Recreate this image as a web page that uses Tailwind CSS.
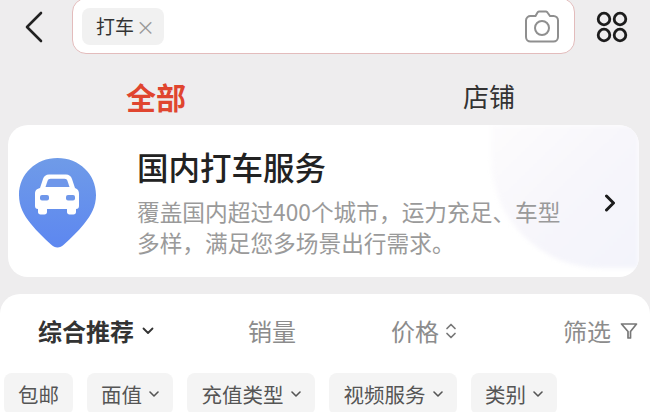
<!DOCTYPE html>
<html lang="zh-CN">

<head>
  <meta charset="UTF-8">
  <meta name="viewport" content="width=device-width, initial-scale=1.0">
  <title>打车</title>
  <script src="https://cdn.jsdelivr.net/npm/@tailwindcss/browser@4"></script>
</head>

<body class="w-[650px] h-[412px] overflow-hidden bg-[#eeedee] font-['Noto_Sans_CJK_SC','Noto_Sans',sans-serif] text-[#222]">
  <!-- search bar -->
  <div class="flex items-end h-[54px]">
    <button class="w-[72px] h-[54px] flex items-center pl-6">
      <svg width="20" height="32" viewBox="0 0 20 32" fill="none" stroke="#222" stroke-width="2.6" stroke-linecap="round" stroke-linejoin="round">
        <path d="M17 2 3 16l14 14" />
      </svg>
    </button>
    <div class="w-[503px] h-[56px] bg-white border border-[#e3bcbc] rounded-[14px] flex items-center justify-between pl-[9px] pr-[14px]">
      <div class="h-[37px] w-[82px] rounded-lg bg-[#f1f1f1] flex items-center pl-[14px] text-[19px] text-[#333]">
        打车<span class="ml-[2px] text-[19px] text-[#999] leading-none">×</span>
      </div>
      <svg width="36" height="34" viewBox="0 0 36 34" fill="none" stroke="#8f8f8f" stroke-width="2">
        <path d="M7 7h4.500l2-3.500a2 2 0 0 1 1.500-1h7a2 2 0 0 1 1.500 1L26 7h3.500A4.500 4.500 0 0 1 34 11.500V28a4.500 4.500 0 0 1-4.500 4.500h-23A4.500 4.500 0 0 1 2 28V11.500A4.500 4.500 0 0 1 7 7Z" />
        <circle cx="18" cy="19" r="7" />
      </svg>
    </div>
    <div class="flex-1 h-[54px] flex items-center justify-center pr-[1px]">
      <svg width="32" height="32" viewBox="0 0 32 32" fill="none" stroke="#1c1c1c" stroke-width="2.800">
        <circle cx="8" cy="8" r="5.800" />
        <circle cx="24" cy="8" r="5.800" />
        <circle cx="8" cy="24" r="5.800" />
        <circle cx="24" cy="24" r="5.800" />
      </svg>
    </div>
  </div>

  <!-- tabs -->
  <div class="h-[71px] flex items-center pt-[13px]">
    <div class="w-[312px] shrink-0 text-center text-[30px] font-bold text-[#e0452f] leading-none">全部</div>
    <div class="w-[354px] shrink-0 text-center text-[26px] text-[#333] leading-none">店铺</div>
  </div>

  <!-- service card -->
  <div class="relative mx-2 h-[152px] w-[631px] rounded-[20px] bg-white overflow-hidden flex items-center pl-[10px]">
    <div class="absolute right-0 top-0 w-[148px] h-[143px] rounded-bl-[110px] bg-linear-to-br from-[#fdfcfd] via-[#f7f6fb] to-[#f3f4fb] blur-[2px]"></div>
    <svg class="relative shrink-0 mt-[2px]" width="79" height="91" viewBox="0 0 79 91">
      <defs>
        <linearGradient id="pin" x1="0" y1="0" x2="0" y2="1">
          <stop offset="0" stop-color="#6f9be8" />
          <stop offset="1" stop-color="#5d87f0" />
        </linearGradient>
      </defs>
      <path d="M39.500 1C61 1 78 17 78 38c0 11-4.500 20-12 29-6.500 8-13 14-20 20.500-4 4-9 4-13 0-7-6.500-13.500-12.500-20-20.500C5.500 58 1 49 1 38 1 17 18 1 39.500 1Z" fill="url(#pin)" />
      <path d="M22 31l3-9c1-3 3-4.500 6-4.500h17c3 0 5 1.500 6 4.500l3 9c3 1 4 3 4 6v12c0 2-1 3-3 3v3c0 1.500-1 2.500-2.500 2.500h-4c-1.500 0-2.500-1-2.500-2.500v-3H29v3c0 1.500-1 2.500-2.500 2.500h-4c-1.500 0-2.500-1-2.500-2.500v-3c-2 0-3-1-3-3V37c0-3 1-5 5-6Z" fill="#fff" />
      <path d="M27.500 30l2-6c.5-1.500 1.500-2.200 3-2.200h14c1.500 0 2.500.7 3 2.200l2 6Z" fill="#6f97ea" />
      <rect x="22" y="38" width="9" height="5.500" rx="2" fill="#6f97ea" />
      <rect x="48" y="38" width="9" height="5.500" rx="2" fill="#6f97ea" />
    </svg>
    <div class="relative ml-[40px] w-[436px] mt-[2px]">
      <h1 class="text-[31.500px] leading-[40px] font-medium text-[#222]">国内打车服务</h1>
      <p class="mt-[10px] text-[22.700px] leading-[31px] text-[#9a9a9a]">覆盖国内超过400个城市，运力充足、车型多样，满足您多场景出行需求。</p>
    </div>
    <svg class="absolute right-[23px] top-[69px]" width="12" height="18" viewBox="0 0 12 18" fill="none" stroke="#1c1c1c" stroke-width="3" stroke-linecap="round" stroke-linejoin="round">
      <path d="m2.500 2 7 7-7 7" />
    </svg>
  </div>

  <!-- result panel -->
  <div class="mt-[17px] h-[130px] rounded-t-[20px] bg-white">
    <div class="h-[76px] flex items-center pl-[38px] text-[24px] text-[#8c8c8c] pb-[3px] whitespace-nowrap">
      <div class="w-[210px] shrink-0 flex items-center gap-[8px] font-bold text-[#333]">
        综合推荐
        <svg width="12" height="8" viewBox="0 0 12 8" fill="none" stroke="#333" stroke-width="1.800" stroke-linecap="round" stroke-linejoin="round"><path d="m1.500 1.500 4.500 4.500 4.500-4.500" /></svg>
      </div>
      <div class="w-[143px] shrink-0">销量</div>
      <div class="w-[172px] shrink-0 flex items-center gap-[6px]">
        价格
        <svg width="12" height="18" viewBox="0 0 12 18" fill="none" stroke="#777" stroke-width="1.700" stroke-linecap="round" stroke-linejoin="round"><path d="m2 6.500 4-4 4 4M2 11.500l4 4 4-4" /></svg>
      </div>
      <div class="shrink-0 flex items-center gap-[9px]">
        筛选
        <svg width="18" height="18" viewBox="0 0 18 18" fill="none" stroke="#777" stroke-width="1.700" stroke-linejoin="round"><path d="M1.500 2h15L10.500 9.500V16h-2.500V9.500Z" /></svg>
      </div>
    </div>
    <div class="flex gap-[14px] pl-1 pt-[3px] text-[20.500px] text-[#555]">
      <div class="h-[42px] w-[69px] flex items-center justify-center rounded-lg bg-[#f4f4f4]">包邮</div>
      <div class="h-[42px] w-[86px] flex items-center justify-center gap-[7px] rounded-lg bg-[#f4f4f4]">
        面值
        <svg width="10" height="6" viewBox="0 0 10 6" fill="none" stroke="#555" stroke-width="1.600" stroke-linecap="round" stroke-linejoin="round"><path d="m1 1 4 4 4-4" /></svg>
      </div>
      <div class="h-[42px] w-[128px] flex items-center justify-center gap-[7px] rounded-lg bg-[#f4f4f4]">
        充值类型
        <svg width="10" height="6" viewBox="0 0 10 6" fill="none" stroke="#555" stroke-width="1.600" stroke-linecap="round" stroke-linejoin="round"><path d="m1 1 4 4 4-4" /></svg>
      </div>
      <div class="h-[42px] w-[128px] flex items-center justify-center gap-[7px] rounded-lg bg-[#f4f4f4]">
        视频服务
        <svg width="10" height="6" viewBox="0 0 10 6" fill="none" stroke="#555" stroke-width="1.600" stroke-linecap="round" stroke-linejoin="round"><path d="m1 1 4 4 4-4" /></svg>
      </div>
      <div class="h-[42px] w-[86px] flex items-center justify-center gap-[7px] rounded-lg bg-[#f4f4f4]">
        类别
        <svg width="10" height="6" viewBox="0 0 10 6" fill="none" stroke="#555" stroke-width="1.600" stroke-linecap="round" stroke-linejoin="round"><path d="m1 1 4 4 4-4" /></svg>
      </div>
    </div>
  </div>
</body>

</html>
